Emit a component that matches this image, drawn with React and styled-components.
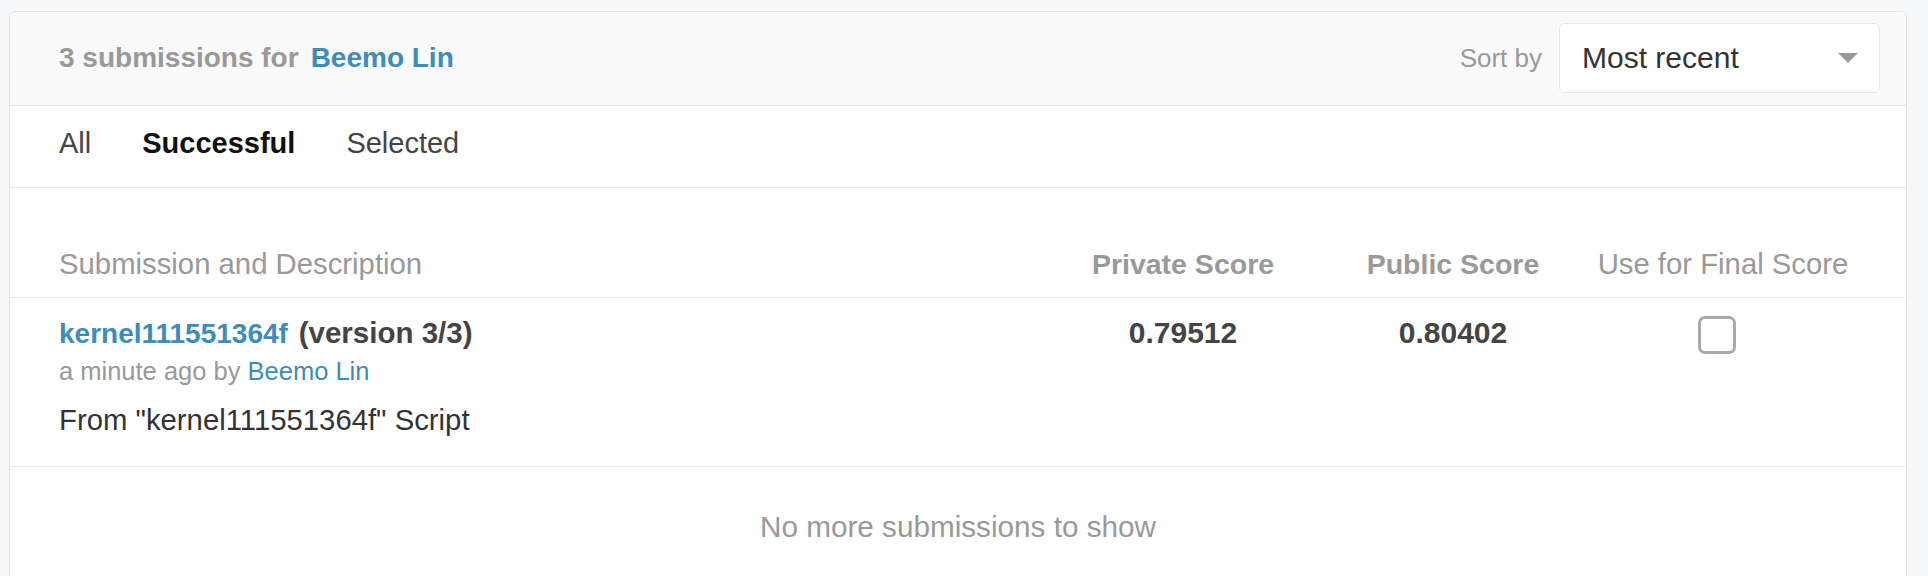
import styled, { createGlobalStyle } from "styled-components";

const GlobalStyle = createGlobalStyle`
  body {
    margin: 0;
    background: #f6f7f9;
    font-family: "Liberation Sans", Arial, sans-serif;
  }
`;

const Card = styled.section`
  box-sizing: border-box;
  width: 1898px;
  margin: 11px 0 0 9px;
  background: #fff;
  border: 1px solid #e3e3e3;
  border-radius: 6px 6px 0 0;
`;

const Header = styled.header`
  display: flex;
  align-items: center;
  justify-content: space-between;
  padding: 11px 26px 12px 49px;
  background: #fafafa;
  border-bottom: 1px solid #e8e8e8;
  border-radius: 6px 6px 0 0;
`;

const Title = styled.h2`
  margin: 0;
  font-size: 28px;
  font-weight: 700;
  color: #999;
`;

const Link = styled.a`
  color: #3c8dbc;
  text-decoration: none;
  margin-left: ${(p) => p.$gap || 0}px;
`;

const SortWrap = styled.div`
  display: flex;
  align-items: center;
  gap: 17px;
`;

const SortLabel = styled.span`
  font-size: 26px;
  color: #999;
`;

const Select = styled.div`
  box-sizing: border-box;
  display: flex;
  align-items: center;
  justify-content: space-between;
  width: 321px;
  height: 70px;
  padding: 0 21px 0 22px;
  background: #fff;
  border: 1px solid #e6e6e6;
  border-radius: 6px;
  font-size: 30px;
  color: #333;
`;

const Caret = styled.span`
  width: 0;
  height: 0;
  border-left: 10px solid transparent;
  border-right: 10px solid transparent;
  border-top: 10px solid #999;
`;

const Tabs = styled.nav`
  display: flex;
  gap: 51px;
  padding: 20px 49px 26px;
  border-bottom: 1px solid #e6e6e6;
`;

const Tab = styled.span`
  font-size: 29px;
  line-height: 35px;
  font-weight: ${(p) => (p.$active ? 700 : 400)};
  color: ${(p) => (p.$active ? "#111" : "#444")};
`;

const Grid = styled.div`
  display: grid;
  grid-template-columns: 1fr 270px 270px 270px;
  padding-left: 49px;
  padding-right: 48px;
`;

const HeadRow = styled(Grid)`
  align-items: baseline;
  padding-top: 58px;
  padding-bottom: 15px;
  border-bottom: 1px solid #ebebeb;
`;

const HeadCell = styled.div`
  font-size: ${(p) => (p.$bold ? 28.5 : 29.3)}px;
  line-height: 35px;
  font-weight: ${(p) => (p.$bold ? 700 : 400)};
  color: #999;
  text-align: ${(p) => p.$align || "left"};
`;

const Row = styled(Grid)`
  align-items: start;
  padding-top: 18px;
  padding-bottom: 29px;
  border-bottom: 1px solid #ebebeb;
`;

const SubTitle = styled.div`
  font-size: 28px;
  line-height: 34px;
  font-weight: 700;
  color: #444;
`;

const Version = styled.span`
  margin-left: 3px;
  font-size: 29.5px;
`;

const Meta = styled.div`
  margin-top: 5px;
  font-size: 25.5px;
  line-height: 30px;
  color: #999;
`;

const Desc = styled.div`
  margin-top: 16px;
  font-size: 29.3px;
  line-height: 35px;
  color: #333;
`;

const Score = styled.div`
  font-size: 30px;
  line-height: 34px;
  font-weight: 700;
  color: #444;
  text-align: center;
`;

const CheckCell = styled.div`
  display: flex;
  justify-content: center;
`;

const Checkbox = styled.span`
  box-sizing: border-box;
  width: 38px;
  height: 38px;
  margin: 0 12px 0 0;
  border: 3px solid #aaa;
  border-radius: 7px;
  background: #fff;
`;

const Footer = styled.div`
  padding: 42px 0 60px;
  text-align: center;
  font-size: 29.7px;
  line-height: 35px;
  color: #999;
`;

const submissions = [
  {
    name: "kernel111551364f",
    version: "(version 3/3)",
    time: "a minute ago",
    author: "Beemo Lin",
    description: 'From "kernel111551364f" Script',
    privateScore: "0.79512",
    publicScore: "0.80402",
  },
];

export default function App() {
  return (
    <>
      <GlobalStyle />
      <Card>
        <Header>
          <Title>
            3 submissions for<Link $gap={12}>Beemo Lin</Link>
          </Title>
          <SortWrap>
            <SortLabel>Sort by</SortLabel>
            <Select>
              Most recent
              <Caret />
            </Select>
          </SortWrap>
        </Header>

        <Tabs>
          <Tab>All</Tab>
          <Tab $active>Successful</Tab>
          <Tab>Selected</Tab>
        </Tabs>

        <HeadRow>
          <HeadCell>Submission and Description</HeadCell>
          <HeadCell $bold $align="center">Private Score</HeadCell>
          <HeadCell $bold $align="center">Public Score</HeadCell>
          <HeadCell $align="center">Use for Final Score</HeadCell>
        </HeadRow>

        {submissions.map((s) => (
          <Row key={s.name}>
            <div>
              <SubTitle>
                <Link>{s.name}</Link> <Version>{s.version}</Version>
              </SubTitle>
              <Meta>
                {s.time} by <Link>{s.author}</Link>
              </Meta>
              <Desc>{s.description}</Desc>
            </div>
            <Score>{s.privateScore}</Score>
            <Score>{s.publicScore}</Score>
            <CheckCell>
              <Checkbox />
            </CheckCell>
          </Row>
        ))}

        <Footer>No more submissions to show</Footer>
      </Card>
    </>
  );
}
